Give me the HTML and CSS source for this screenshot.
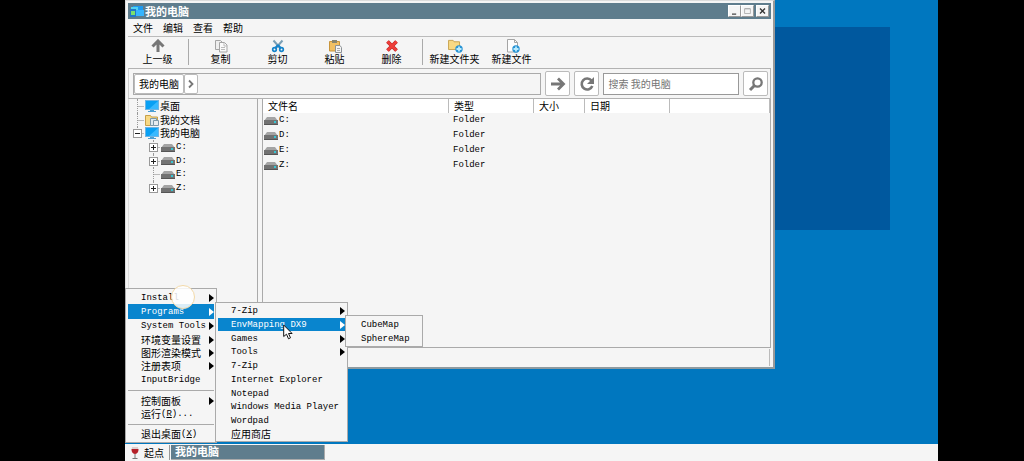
FILE: index.html
```html
<!DOCTYPE html>
<html lang="zh-CN">
<head>
<meta charset="utf-8">
<title>我的电脑</title>
<link rel="stylesheet" href="styles.css">
</head>
<body>
<svg class="defs" aria-hidden="true">
  <symbol id="monitor" viewBox="0 0 14 12">
    <path d="M0 0h14v10H0z" fill="#6db4e4"/><path d="M1 1h12v8H1z" fill="#08a0f4"/><path d="M13 1v8H4z" fill="#38b9ff"/><path d="M5 10h4v1h2v1H3v-1h2z" fill="#4b9fd4"/>
  </symbol>
  <symbol id="drive" viewBox="0 0 14 9">
    <path d="M3 1h8l3 4H0z" fill="#a4a4a4"/><path d="M0 4h14v4H0z" fill="#727272"/><path d="M0 8h14v1H0z" fill="#555"/><path d="M10 5h2v2h-2z" fill="#36c5d3"/>
  </symbol>
  <symbol id="folder" viewBox="0 0 14 12">
    <path d="M.5 1.500h5l1 1.500h6v8.500h-12z" fill="#f8d984" stroke="#c6a04a"/>
  </symbol>
  <symbol id="plus" viewBox="0 0 8 8">
    <circle cx="4" cy="4" r="3.700" fill="#2793d4"/><path d="M4 1.500v5M1.500 4h5" stroke="#b9ecff" stroke-width="1.800"/>
  </symbol>
</svg>

<main class="desktop">
  <div class="wallpaper"></div>

  <section class="window">
    <header class="titlebar">
      <svg class="title-icon" viewBox="0 0 14 12"><path d="M3 1h10v8H3z" fill="#1e9af0"/><path d="M1 2h7v4H1z" fill="#52d2f2"/><path d="M0 4h6v8H0z" fill="#2078c8"/><path d="M1 6h4v4H1z" fill="#7be06e"/><path d="M6 5h8v6H6z" fill="#35b5ff"/></svg>
      <h1 class="title">我的电脑</h1>
      <button class="winbtn" aria-label="最小化"><svg viewBox="0 0 12 12"><path d="M3 9h5v1.500H3z" fill="#444"/></svg></button>
      <button class="winbtn" aria-label="最大化"><svg viewBox="0 0 12 12"><path d="M2.500 3.500h7v5.500h-7zM2.500 3h7" fill="none" stroke="#aaa"/></svg></button>
      <button class="winbtn winbtn-close" aria-label="关闭"><svg viewBox="0 0 12 12"><path d="M3 3l6 6M9 3L3 9" stroke="#333" stroke-width="1.600"/></svg></button>
    </header>

    <nav class="menubar">
      <button>文件</button><button>编辑</button><button>查看</button><button>帮助</button>
    </nav>

    <div class="toolbar">
      <button class="tool"><svg viewBox="0 0 16 14"><path d="M8 13V4M2.500 7.500L8 2l5.500 5.500" fill="none" stroke="#777" stroke-width="3"/></svg>上一级</button>
      <span class="divider"></span>
      <button class="tool"><svg viewBox="0 0 16 14"><path d="M2.500 1.500h5l2 2v7h-7z" fill="#eee" stroke="#a5a5a5"/><path d="M6.500 3.500h5l2.500 2.500v7H6.500z" fill="#fafafa" stroke="#a5a5a5"/><path d="M11 4v3h3M8 8.500h4M8 10.500h4" fill="none" stroke="#bbb"/></svg>复制</button>
      <button class="tool"><svg viewBox="0 0 16 14"><path d="M3.500 1.500l7 8M12.500 1.500l-7 8" stroke="#7b9fb5" stroke-width="2"/><path d="M8 6l3 3.500M8 6L5 9.500" stroke="#1684cb" stroke-width="2"/><circle cx="4.500" cy="10.500" r="1.800" fill="none" stroke="#1684cb" stroke-width="1.700"/><circle cx="11.500" cy="10.500" r="1.800" fill="none" stroke="#1684cb" stroke-width="1.700"/></svg>剪切</button>
      <button class="tool"><svg viewBox="0 0 16 14"><path d="M2.500 2.500h10v9.500h-10z" fill="#f2c062" stroke="#c9953b"/><path d="M5 1h5v3H5z" fill="#89866e"/><path d="M8.500 6.500H13l1.500 2v5h-6z" fill="#f4f4f4" stroke="#8c9296"/><path d="M10 9.500h3M10 11.500h3" stroke="#aaa"/></svg>粘贴</button>
      <button class="tool"><svg viewBox="0 0 16 14"><path d="M3.500 2.500l9 9M12.500 2.500l-9 9" stroke="#b92626" stroke-width="3.800"/><path d="M3.500 2.500l9 9M12.500 2.500l-9 9" stroke="#ee3d38" stroke-width="2.600"/></svg>删除</button>
      <span class="divider"></span>
      <button class="tool"><svg viewBox="0 0 16 14"><use href="#folder" x="1" y="0" width="13" height="11"/><use href="#plus" x="8" y="6" width="8" height="8"/></svg>新建文件夹</button>
      <button class="tool"><svg viewBox="0 0 16 14"><path d="M3.500.500h7l3 3v9.500h-10z" fill="#fdfdfd" stroke="#a5a5a5"/><path d="M10.500.500v3h3" fill="none" stroke="#a5a5a5"/><use href="#plus" x="8" y="6" width="8" height="8"/></svg>新建文件</button>
    </div>

    <div class="addressbar">
      <div class="crumbs">
        <button class="crumb">我的电脑</button>
        <button class="crumb crumb-next" aria-label="展开"><svg viewBox="0 0 8 10"><path d="M2 1.500L5.500 5 2 8.500" fill="none" stroke="#777" stroke-width="1.800"/></svg></button>
      </div>
      <button class="square" aria-label="转到"><svg viewBox="0 0 16 16"><path d="M1 8h12M8 2.500L13.500 8 8 13.500" fill="none" stroke="#777" stroke-width="2.800"/></svg></button>
      <button class="square" aria-label="刷新"><svg viewBox="0 0 16 16"><path d="M12.500 4.500A5.500 5.500 0 1 0 13.300 10" fill="none" stroke="#777" stroke-width="2.600"/><path d="M15 1v7H8z" fill="#777"/></svg></button>
      <input class="search" type="text" placeholder="搜索 我的电脑" aria-label="搜索 我的电脑">
      <button class="square" aria-label="搜索"><svg viewBox="0 0 16 16"><circle cx="9.500" cy="6.500" r="4.200" fill="none" stroke="#777" stroke-width="2.300"/><path d="M6.500 9.500L2 14" stroke="#777" stroke-width="3"/></svg></button>
    </div>

    <div class="panes">
      <div class="side">
        <ul class="tree">
          <li class="node"><span class="branch"></span><svg class="tree-icon"><use href="#monitor"/></svg>桌面</li>
          <li class="node"><span class="branch"></span><svg class="tree-icon" viewBox="0 0 14 12"><use href="#folder" width="14" height="12"/><path d="M5.500 4.500h6v7h-6z" fill="#dce8ef" stroke="#7d98a9"/><path d="M8.500 6.500h5v5h-5z" fill="#e7edf1" stroke="#7d98a9"/></svg>我的文档</li>
          <li class="node"><span class="branch branch-end"><i class="toggle minus"></i></span><svg class="tree-icon"><use href="#monitor"/></svg>我的电脑</li>
          <li class="node child"><span class="branch"><i class="toggle"></i></span><svg class="drive"><use href="#drive"/></svg><span class="latin">C:</span></li>
          <li class="node child"><span class="branch"><i class="toggle"></i></span><svg class="drive"><use href="#drive"/></svg><span class="latin">D:</span></li>
          <li class="node child"><span class="branch"></span><svg class="drive"><use href="#drive"/></svg><span class="latin">E:</span></li>
          <li class="node child"><span class="branch branch-end"><i class="toggle"></i></span><svg class="drive"><use href="#drive"/></svg><span class="latin">Z:</span></li>
        </ul>
      </div>
      <div class="files">
        <table class="list">
          <colgroup><col class="c-name"><col class="c-type"><col class="c-size"><col class="c-date"><col></colgroup>
          <thead><tr><th>文件名</th><th>类型</th><th>大小</th><th>日期</th><th></th></tr></thead>
          <tbody class="latin">
            <tr><td class="name"><svg class="drive"><use href="#drive"/></svg>C:</td><td>Folder</td><td></td><td></td><td></td></tr>
            <tr><td class="name"><svg class="drive"><use href="#drive"/></svg>D:</td><td>Folder</td><td></td><td></td><td></td></tr>
            <tr><td class="name"><svg class="drive"><use href="#drive"/></svg>E:</td><td>Folder</td><td></td><td></td><td></td></tr>
            <tr><td class="name"><svg class="drive"><use href="#drive"/></svg>Z:</td><td>Folder</td><td></td><td></td><td></td></tr>
          </tbody>
        </table>
      </div>
    </div>
    <footer class="status"></footer>
  </section>

  <footer class="taskbar">
    <button class="start"><svg viewBox="0 0 10 14"><path d="M2 1h6c1 4 0 6-3 7-3-1-4-3-3-7z" fill="#ddd0d0"/><path d="M1.500 3h7c0 3-1 4.500-3.500 5-2.500-.500-3.500-2-3.500-5z" fill="#b52028"/><path d="M5 8v4M2.500 12.500h5" stroke="#777"/></svg>起点</button>
    <button class="task">我的电脑</button>
  </footer>

  <div class="menu menu-start">
    <button class="item latin sub">Install</button>
    <button class="item latin sub active">Programs</button>
    <button class="item latin sub">System Tools</button>
    <button class="item sub">环境变量设置</button>
    <button class="item sub">图形渲染模式</button>
    <button class="item sub">注册表项</button>
    <button class="item latin">InputBridge</button>
    <hr class="rule">
    <button class="item sub">控制面板</button>
    <button class="item mixed">运行<span class="latin">(<u>R</u>)...</span></button>
    <hr class="rule">
    <button class="item mixed">退出桌面<span class="latin">(<u>X</u>)</span></button>
  </div>

  <div class="menu menu-programs">
    <button class="item latin sub">7-Zip</button>
    <button class="item latin sub active">EnvMapping DX9</button>
    <button class="item latin sub">Games</button>
    <button class="item latin sub">Tools</button>
    <button class="item latin">7-Zip</button>
    <button class="item latin">Internet Explorer</button>
    <button class="item latin">Notepad</button>
    <button class="item latin">Windows Media Player</button>
    <button class="item latin">Wordpad</button>
    <button class="item">应用商店</button>
  </div>

  <div class="menu menu-env">
    <button class="item latin">CubeMap</button>
    <button class="item latin">SphereMap</button>
  </div>

  <div class="touch"></div>
  <svg class="pointer" viewBox="0 0 10 16"><path d="M.700 1v11.500l2.800-2.300 2 4.600 2-1-2-4.300h3.600z" fill="#fff" stroke="#111"/></svg>
</main>
</body>
</html>
```
FILE: styles.css
```css
* { box-sizing: border-box; }

body {
  margin: 0;
  background: #000;
  font: 10px/14px "Noto Sans CJK SC", sans-serif;
  color: #000;
}

button {
  margin: 0;
  padding: 0;
  border: 0;
  background: none;
  color: inherit;
  font: inherit;
  white-space: nowrap;
}

svg { display: block; flex: none; }
.defs { position: absolute; width: 0; height: 0; }
.latin { font-family: "Liberation Mono", "Noto Sans CJK SC", monospace; font-size: 9px; }

.desktop {
  position: relative;
  display: flex;
  flex-direction: column;
  justify-content: space-between;
  align-items: flex-start;
  height: 100vh;
  margin: 0 86px 0 125px;
  background: #0077bf;
  overflow: hidden;
}

.wallpaper {
  position: absolute;
  top: 27px;
  right: 48px;
  width: 25%;
  height: 44%;
  background: #00589e;
}

/* Explorer window */
.window {
  position: relative;
  display: flex;
  flex-direction: column;
  width: 80%;
  height: 80%;
  padding: 2px 2px 1px;
  border: 1px solid #dcdcdc;
  border-right: 2px solid #999;
  border-bottom: 2px solid #8d9aa0;
  background: #f5f5f5;
}

.titlebar {
  display: flex;
  align-items: center;
  height: 16px;
  padding: 0 2px 1px;
  background: #5f7d8d;
}
.title-icon { width: 14px; height: 12px; }
.title {
  flex: 1;
  margin: 0 0 0 1px;
  font-size: 11px;
  line-height: 14px;
  color: #fff;
}
.winbtn {
  width: 13px;
  height: 12px;
  border: 1px solid #fff;
  border-right-color: #999;
  border-bottom-color: #999;
  background: #f5f5f5;
}
.winbtn svg { width: 11px; height: 10px; }
.winbtn-close { margin-left: 2px; }

.menubar {
  display: flex;
  gap: 10px;
  height: 18px;
  padding: 0 5px;
  border-bottom: 1px solid #bbb;
}

.toolbar { display: flex; height: 31px; padding: 0 1px 1px; }
.tool {
  display: flex;
  flex-direction: column;
  align-items: center;
  justify-content: center;
  width: 57px;
  line-height: 12px;
}
.tool svg { width: 16px; height: 14px; }
.divider { width: 1px; margin: 2px 3px 2px 2px; background: #aaa; }

.addressbar {
  display: flex;
  align-items: center;
  gap: 4px;
  height: 31px;
  padding: 0 2px 0 4px;
  border: 1px solid #b2b2b2;
  border-left-color: #ccc;
}
.crumbs {
  display: flex;
  flex: 1;
  height: 22px;
  border: 1px solid #aaa;
}
.crumb {
  padding: 0 4px;
  border: 1px solid #bbb;
  border-radius: 2px;
  background: #fff;
}
.crumb-next { padding: 0 2px; }
.crumb-next svg { width: 8px; height: 10px; }
.square {
  display: grid;
  place-items: center;
  width: 25px;
  height: 25px;
  border: 1px solid #bbb;
  border-radius: 2px;
  background: #fff;
}
.square svg { width: 16px; height: 16px; }
.search {
  width: 136px;
  height: 22px;
  padding: 0 4px;
  border: 1px solid #999;
  border-radius: 0;
  background: #fff;
  font: inherit;
}
.search::placeholder { color: #757575; opacity: 1; }

.panes { display: flex; flex: 1; gap: 4px; min-height: 0; }
.side {
  width: 130px;
  padding-left: 8px;
  border: 1px solid #aaa;
  border-width: 0 1px 1px;
  border-left-color: #ddd;
}
.tree {
  display: flex;
  flex-direction: column;
  height: 96px;
  margin: 0;
  padding: 0;
  list-style: none;
}
.node { display: flex; flex: 1; align-items: center; min-height: 0; gap: 1px; }
.child { padding-left: 16px; }
.tree-icon { width: 14px; height: 12px; }
.drive { width: 14px; height: 9px; }
.branch {
  position: relative;
  width: 7px;
  height: 14px;
  background: linear-gradient(#bbb, #bbb) 0 7px / 7px 1px no-repeat;
  border-left: 1px dotted #999;
}
.branch-end { height: 8px; align-self: flex-start; }
.toggle {
  position: absolute;
  left: -5px;
  top: 3px;
  width: 9px;
  height: 9px;
  border: 1px solid #999;
  background:
    linear-gradient(#222, #222) center / 5px 1px no-repeat,
    linear-gradient(#222, #222) center / 1px 5px no-repeat,
    #fff;
}
.minus { background: linear-gradient(#222, #222) center / 5px 1px no-repeat, #fff; }

.files { flex: 1; border: 1px solid #aaa; border-top: 0; }
.list { width: 100%; table-layout: fixed; border-collapse: separate; border-spacing: 0; }
.c-name { width: 186px; }
.c-type { width: 85px; }
.c-size { width: 51px; }
.c-date { width: 85px; }
.list th {
  height: 14px;
  padding: 0 5px;
  border-right: 1px solid #bbb;
  background: #fff;
  font-weight: normal;
  line-height: 14px;
  text-align: left;
}
.list td { height: 15px; padding: 0 4px; line-height: 15px; }
.list .name { display: flex; align-items: center; gap: 1px; padding: 0 1px; }
.status { height: 17px; margin: 1px 1px 0 0; border-right: 1px solid #bbb; }

/* Taskbar */
.taskbar {
  display: flex;
  align-self: stretch;
  height: 17px;
  padding: 1px 0;
  background: #f5f5f5;
}
.start {
  display: flex;
  align-items: center;
  gap: 4px;
  width: 45px;
  padding: 0 5px;
  border-right: 1px solid #999;
}
.start svg { width: 10px; height: 14px; }
.task {
  width: 154px;
  margin-left: 1px;
  padding: 0 4px 1px;
  border-right: 1px solid #aaa;
  border-bottom: 1px solid #aaa;
  background: #5f7d8d;
  color: #fff;
  font-size: 11px;
  font-weight: bold;
  line-height: 13px;
  text-align: left;
}

/* Cascading menus */
.menu {
  position: absolute;
  display: flex;
  flex-direction: column;
  padding: 1px 2px;
  border: 1px solid #aaa;
  background: #f5f5f5;
}
.menu-start { left: 0; bottom: 18px; width: 92px; height: 155px; }
.menu-programs { left: 90px; bottom: 19px; width: 133px; height: 140px; }
.menu-env { left: 220px; bottom: 114px; width: 78px; height: 32px; }
.item {
  display: flex;
  flex: 1;
  align-items: center;
  justify-content: space-between;
  min-height: 0;
  padding: 0 0 0 13px;
  line-height: 12px;
}
.item.latin { padding-top: 1px; }
.mixed { justify-content: flex-start; }
.sub::after {
  content: "";
  border: 4px solid transparent;
  border-left: 5px solid #000;
  border-right: 0;
}
.active { background: #0985ce; color: #fff; }
.active::after { border-left-color: #fff; }
.rule {
  width: 100%;
  height: 1px;
  margin: 3px 0;
  border: 0;
  background: #aaa;
}

.touch {
  position: absolute;
  left: 46px;
  bottom: 152px;
  width: 24px;
  height: 24px;
  border: 1px solid #f3d9a8;
  border-radius: 50%;
  background: rgba(255, 255, 255, .85);
}
.pointer { position: absolute; left: 158px; bottom: 121px; width: 10px; height: 16px; }
```
